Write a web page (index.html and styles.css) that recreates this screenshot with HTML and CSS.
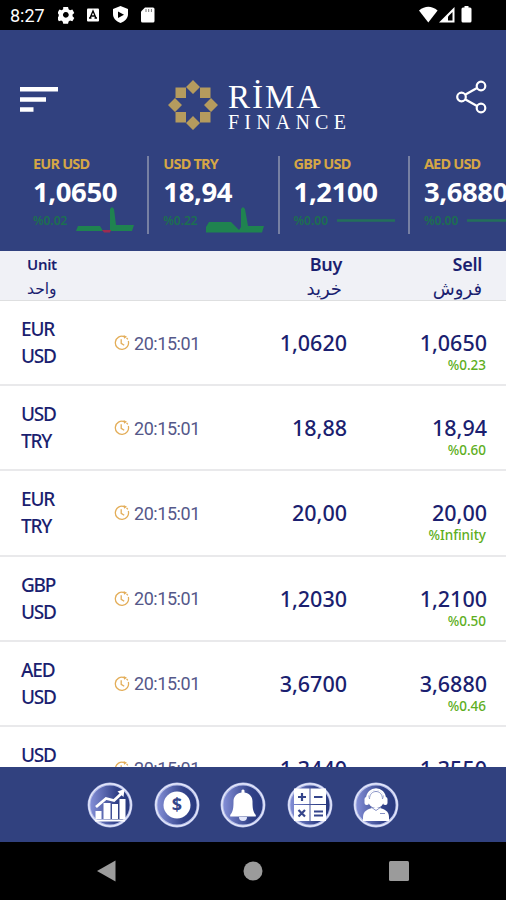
FILE: index.html
```html
<!DOCTYPE html>
<html lang="en">
<head>
    <meta charset="UTF-8">
    <meta name="viewport" content="width=device-width, initial-scale=1.0">
    <title>Rima Finance</title>
    <link rel="stylesheet" href="styles.css">
</head>
<body>

    <div class="app">
        <!-- icons used more than once -->
        <svg class="defs" width="0" height="0" aria-hidden="true">
            <defs>
                <linearGradient id="disc">
                    <stop offset="0" stop-color="#8792da"/>
                    <stop offset="0.65" stop-color="#33438a"/>
                    <stop offset="1" stop-color="#27387c"/>
                </linearGradient>
                <symbol id="clock" viewBox="0 0 16 16">
                    <path d="M10.2 1.6A6.6 6.6 0 1 0 14.3 6M12.6 2.8l1.2 1.5M7.2 4.3v4l3 2" fill="none" stroke="#e3ad58" stroke-width="1.3"/>
                    <path d="M9.6 0l3.4 1.7-2.9 2z" fill="#e3ad58"/>
                </symbol>
                <symbol id="ring" viewBox="0 0 46 46">
                    <circle cx="23" cy="23" r="21" fill="url(#disc)" stroke="#b9c1ea" stroke-width="2.800"/>
                    <circle cx="23" cy="23" r="21.200" fill="none" stroke="#f1f3ff" stroke-width="1"/>
                </symbol>
            </defs>
        </svg>

        <div class="status-bar">
            <span class="time">8:27</span>
            <svg class="left-icons" width="100" height="18" viewBox="0 0 100 18">
                <path d="M6.5 1h5l.6 2.5 1.5.9 2.4-.8 2 3.6-1.8 1.7v1.8l1.8 1.7-2 3.6-2.4-.8-1.5.9-.6 2.4h-5l-.6-2.4-1.5-.9-2.4.8-2-3.6 1.8-1.7V8.900L.5 7.200l2-3.600 2.400.800 1.500-.900zM9.200 6.200a3 3 0 1 0 .01 0z" transform="translate(-1 0) scale(.96)" fill="#fff" fill-rule="evenodd"/>
                <rect x="29" y="2.500" width="12" height="13" rx="1" fill="#fff"/>
                <path d="M32 12l3-7 3 7M33 10h4M31 12h2.500M36.500 12h2.500" fill="none" stroke="#000" stroke-width="1.300"/>
                <path d="M62.500 0l7.500 3v5c0 4-3 7.500-7.500 9-4.500-1.500-7.500-5-7.500-9V3z" fill="#fff"/>
                <path d="M60 5.500l6 3.200-6 3.300z" fill="#000"/>
                <path d="M87 1.500h8a1.500 1.500 0 0 1 1.500 1.500v12a1.500 1.500 0 0 1-1.500 1.500H84.500A1.500 1.500 0 0 1 83 15V5.500z" fill="#fff"/>
                <path d="M88 3v3M90.700 3v3M93.400 3v3" stroke="#777" stroke-width="1"/>
            </svg>
            <svg class="right-icons" width="56" height="18" viewBox="0 0 56 18">
                <path d="M0 4.500Q9.300-3 18.600 4.500L9.300 16.500z" fill="#fff"/>
                <path d="M20 16.500L35.500 1v15.500z" fill="#fff"/>
                <path d="M29 10.500l4.500-4.500v8.500H29z" fill="#000"/>
                <path d="M45.500 0h4v1.500H51a1.500 1.500 0 0 1 1.500 1.500v12a1.500 1.500 0 0 1-1.500 1.500h-7a1.500 1.500 0 0 1-1.500-1.500V3A1.500 1.500 0 0 1 44 1.500h1.500z" fill="#fff"/>
            </svg>
        </div>

        <header class="header">
            <div class="top">
                <svg class="menu" width="38" height="27" viewBox="0 0 38 27">
                    <path d="M0 3.200h38M0 13.400h26M0 23.500h13.500" stroke="#fff" stroke-width="4.500"/>
                </svg>
                <div class="logo">
                    <svg width="50" height="50" viewBox="0 0 50 50" fill="#b59b5e">
                        <path d="M25 0l7 7-7 7-7-7zM25 36l7 7-7 7-7-7zM7 18l7 7-7 7-7-7zM43 18l7 7-7 7-7-7z"/>
                        <path d="M7.500 7.500h10.500v10.500H7.500zM32 7.500h10.500v10.500H32zM7.500 32h10.500v10.500H7.500zM32 32h10.500v10.500H32z"/>
                    </svg>
                    <div class="logo-text">
                        <span class="rima">RİMA</span>
                        <span class="finance">FINANCE</span>
                    </div>
                </div>
                <svg class="share" width="32" height="34" viewBox="0 0 32 34" fill="none" stroke="#fff" stroke-width="2.200">
                    <path d="M9.500 14.500L21 8M9.500 19.500L21 26"/>
                    <circle cx="5.500" cy="17" r="4.300"/>
                    <circle cx="25" cy="6" r="4.300"/>
                    <circle cx="25" cy="28" r="4.300"/>
                </svg>
            </div>

            <div class="ticker">
                <div class="quote">
                    <span class="pair">EUR USD</span>
                    <span class="price">1,0650</span>
                    <div class="trend">
                        <span>%0.02</span>
                        <svg width="58" height="26" viewBox="0 0 58 26">
                            <path d="M0 24l2-5h22l3 5zM34 24V2l2-2 2 2 2 16h18l-2 6z" fill="#1f8350"/>
                            <path d="M26 23h9l-1 2.500h-6z" fill="#9c2c50"/>
                        </svg>
                    </div>
                </div>
                <div class="quote">
                    <span class="pair">USD TRY</span>
                    <span class="price">18,94</span>
                    <div class="trend">
                        <span>%0.22</span>
                        <svg width="58" height="26" viewBox="0 0 58 26">
                            <path d="M0 25.500V20l3-5h22l8 8 2-3V2l2-2 2 2 3 17h16l-2 6.500z" fill="#1f8350"/>
                        </svg>
                    </div>
                </div>
                <div class="quote">
                    <span class="pair">GBP USD</span>
                    <span class="price">1,2100</span>
                    <div class="trend">
                        <span>%0.00</span>
                        <svg width="58" height="26" viewBox="0 0 58 26"><path d="M0 13.500h58" stroke="#23705a" stroke-width="2.500"/></svg>
                    </div>
                </div>
                <div class="quote">
                    <span class="pair">AED USD</span>
                    <span class="price">3,6880</span>
                    <div class="trend">
                        <span>%0.00</span>
                        <svg width="58" height="26" viewBox="0 0 58 26"><path d="M0 13.500h58" stroke="#23705a" stroke-width="2.500"/></svg>
                    </div>
                </div>
            </div>
        </header>

        <div class="columns">
            <div class="col-unit"><span>Unit</span><span class="fa" lang="fa">واحد</span></div>
            <div class="col-buy"><span>Buy</span><span class="fa" lang="fa">خرید</span></div>
            <div class="col-sell"><span>Sell</span><span class="fa" lang="fa">فروش</span></div>
        </div>

        <main class="list">
            <div class="row">
                <div class="unit">EUR<br>USD</div>
                <div class="updated"><svg width="16" height="16"><use href="#clock"/></svg>20:15:01</div>
                <div class="buy">1,0620</div>
                <div class="sell">1,0650<span class="change">%0.23</span></div>
            </div>
            <div class="row">
                <div class="unit">USD<br>TRY</div>
                <div class="updated"><svg width="16" height="16"><use href="#clock"/></svg>20:15:01</div>
                <div class="buy">18,88</div>
                <div class="sell">18,94<span class="change">%0.60</span></div>
            </div>
            <div class="row">
                <div class="unit">EUR<br>TRY</div>
                <div class="updated"><svg width="16" height="16"><use href="#clock"/></svg>20:15:01</div>
                <div class="buy">20,00</div>
                <div class="sell">20,00<span class="change">%Infinity</span></div>
            </div>
            <div class="row">
                <div class="unit">GBP<br>USD</div>
                <div class="updated"><svg width="16" height="16"><use href="#clock"/></svg>20:15:01</div>
                <div class="buy">1,2030</div>
                <div class="sell">1,2100<span class="change">%0.50</span></div>
            </div>
            <div class="row">
                <div class="unit">AED<br>USD</div>
                <div class="updated"><svg width="16" height="16"><use href="#clock"/></svg>20:15:01</div>
                <div class="buy">3,6700</div>
                <div class="sell">3,6880<span class="change">%0.46</span></div>
            </div>
            <div class="row">
                <div class="unit">USD</div>
                <div class="updated"><svg width="16" height="16"><use href="#clock"/></svg>20:15:01</div>
                <div class="buy">1,3440</div>
                <div class="sell">1,3550</div>
            </div>
        </main>

        <nav class="tabs">
            <svg width="46" height="46" viewBox="0 0 46 46">
                <use href="#ring"/>
                <path d="M8 37.500h30v2H8zM8.500 29h6v8h-6zM16.500 21h7v16h-7zM25 22h6v15h-6zM32.500 17h6v20h-6z" fill="#fff"/>
                <path d="M9 25l10-8.500 8 2L35 11" fill="none" stroke="#fff" stroke-width="2.800"/>
                <path d="M30.500 9.500L37.500 7l-1 8z" fill="#fff"/>
            </svg>
            <svg width="46" height="46" viewBox="0 0 46 46">
                <use href="#ring"/>
                <circle cx="23" cy="23" r="13.500" fill="#fff"/>
                <text x="23" y="29" class="dollar">$</text>
            </svg>
            <svg width="46" height="46" viewBox="0 0 46 46">
                <use href="#ring"/>
                <path d="M21.500 8.500a1.600 1.600 0 0 1 3 0v2c6 1 8 5 8 9 0 7 .500 10 3.300 13.500v1.500H10.200V33c2.800-3.500 3.300-6.500 3.300-13.500 0-4 2-8 8-9z" fill="#fff"/>
                <path d="M19 35h8a4 4 0 0 1-8 0z" fill="#e4e8fb"/>
            </svg>
            <svg width="46" height="46" viewBox="0 0 46 46">
                <use href="#ring"/>
                <path d="M7 6.500h15.500V22H7zM23.500 6.500H39V22H23.500zM7 23h15.500v16H7zM23.500 23H39v16H23.500z" fill="#fff"/>
                <path d="M11 15h8M15 11v8M27 15h8.500M11.500 28l6.500 6.500M18 28l-6.500 6.500M27 29.500h9M27 33.500h9" stroke="#35458b" stroke-width="2.200"/>
            </svg>
            <svg width="46" height="46" viewBox="0 0 46 46">
                <use href="#ring"/>
                <path d="M10 39v-4c0-6 5-8 9-9h8c4 1 9 3 9 9v4z" fill="#fff"/>
                <rect x="15.500" y="8" width="15" height="18" rx="7" fill="#fff"/>
                <path d="M14 17c0-13 18-13 18 0" fill="none" stroke="#fff" stroke-width="2"/>
                <path d="M16.500 17c0-10 13-10 13 0M18 25l5 3.500 5-3.500M27 31.500h5" fill="none" stroke="#8792c6" stroke-width="1"/>
                <rect x="11.500" y="15" width="4.500" height="8" rx="2" fill="#fff"/>
                <rect x="30" y="15" width="4.500" height="8" rx="2" fill="#fff"/>
            </svg>
        </nav>

        <div class="system-nav">
            <svg width="19" height="22" viewBox="0 0 19 22"><path d="M0 11L18.500.500v21z" fill="#9b9b9b"/></svg>
            <svg width="20" height="20" viewBox="0 0 20 20"><circle cx="10" cy="10" r="9.500" fill="#9b9b9b"/></svg>
            <svg width="20" height="20" viewBox="0 0 20 20"><rect width="20" height="20" rx="1.500" fill="#9b9b9b"/></svg>
        </div>
    </div>

</body>
</html>
```
FILE: styles.css
```css
* {
    box-sizing: border-box;
}

body {
    margin: 0;
    font-family: 'Noto Sans', 'Open Sans', sans-serif;
    color: #1b1f70;
    background: #000;
    overflow: hidden;
}

svg {
    display: block;
    flex-shrink: 0;
}

.app {
    width: 506px;
    height: 900px;
    display: flex;
    flex-direction: column;
    overflow: hidden;
}

/* status bar */
.status-bar {
    height: 30px;
    flex-shrink: 0;
    display: flex;
    align-items: center;
    padding: 0 31px 0 10px;
    background: #000;
    color: #fff;
}

.time {
    width: 48px;
    font-family: Roboto, sans-serif;
    font-size: 18px;
    line-height: 30px;
    padding-top: 2px;
}

.right-icons {
    margin-left: auto;
}

/* header */
.header {
    height: 221px;
    flex-shrink: 0;
    background: #31417f;
    overflow: hidden;
}

.top {
    height: 123px;
    display: flex;
    align-items: flex-start;
    padding: 50px 18px 0 20px;
}

.menu {
    margin-top: 6px;
}

.logo {
    display: flex;
    gap: 10px;
    margin-left: 110px;
}

.logo-text {
    display: flex;
    flex-direction: column;
    color: #fff;
    font-family: 'Liberation Serif', serif;
}

.rima {
    font-size: 33px;
    line-height: 34px;
    letter-spacing: 2px;
}

.finance {
    font-size: 20px;
    line-height: 17px;
    letter-spacing: 5.200px;
}

.share {
    margin: 0 0 0 auto;
}

.ticker {
    display: flex;
    padding-left: 33px;
}

.quote {
    width: 116.300px;
    height: 78px;
    margin: 3px 14px 0 0;
    flex-shrink: 0;
    display: flex;
    flex-direction: column;
    border-right: 2px solid #7780a3;
}

.pair {
    font-size: 14.500px;
    font-weight: 700;
    line-height: 14px;
    letter-spacing: -0.800px;
    color: #d5a646;
}

.price {
    font-size: 27.500px;
    font-weight: 700;
    line-height: 34px;
    margin-top: 5px;
    letter-spacing: -0.400px;
    color: #fff;
}

.trend {
    display: flex;
    gap: 9px;
    margin-top: -2px;
    font-size: 12px;
    font-weight: 600;
    line-height: 28px;
    color: #1c6f51;
}

.trend span {
    width: 34px;
}

/* column titles */
.columns {
    height: 50px;
    flex-shrink: 0;
    display: grid;
    grid-template-columns: 57px 1fr 140px;
    padding: 1px 24px 0 27px;
    background: #f0f1f6;
    border-bottom: 1px solid #dedfe0;
    text-align: right;
    font-size: 18px;
    font-weight: 600;
}

.columns div {
    display: flex;
    flex-direction: column;
}

.columns span {
    line-height: 25px;
    letter-spacing: -0.300px;
}

.columns .fa {
    font-family: 'DejaVu Sans', sans-serif;
    font-weight: 400;
    font-size: 18px;
    line-height: 24px;
    letter-spacing: 0;
}

.columns .col-unit {
    text-align: left;
    font-size: 15px;
}

.columns .col-unit .fa {
    font-size: 15.500px;
}

/* rates */
.list {
    height: 466px;
    flex-shrink: 0;
    overflow: hidden;
    background: #fff;
}

.row {
    height: 85.200px;
    display: grid;
    grid-template-columns: 93px 120px 113px 140px;
    padding: 15px 19px 0 21px;
    border-bottom: 2px solid #e9e9eb;
    font-size: 21.500px;
    font-weight: 500;
}

.unit {
    font-size: 19px;
    line-height: 27px;
    letter-spacing: -1.200px;
}

.updated {
    display: flex;
    align-items: center;
    gap: 4px;
    height: 54px;
    font-family: Roboto, sans-serif;
    font-size: 18px;
    letter-spacing: -0.450px;
    font-weight: 400;
    color: #555889;
}

.buy,
.sell {
    padding-top: 12px;
    line-height: 30px;
    text-align: right;
}

.sell {
    display: flex;
    flex-direction: column;
}

.change {
    margin-top: -3px;
    padding-right: 1px;
    font-size: 13.500px;
    line-height: 20px;
    color: #5dae21;
}

/* bottom tabs */
.tabs {
    height: 75px;
    flex-shrink: 0;
    display: flex;
    align-items: center;
    justify-content: center;
    gap: 20.500px;
    padding-right: 20px;
    background: #31417f;
}

.dollar {
    font: 700 18px 'Noto Sans', sans-serif;
    text-anchor: middle;
    fill: #35458b;
}

.system-nav {
    height: 58px;
    flex-shrink: 0;
    display: flex;
    align-items: center;
    justify-content: space-between;
    padding: 0 97px;
    background: #000;
}
```
